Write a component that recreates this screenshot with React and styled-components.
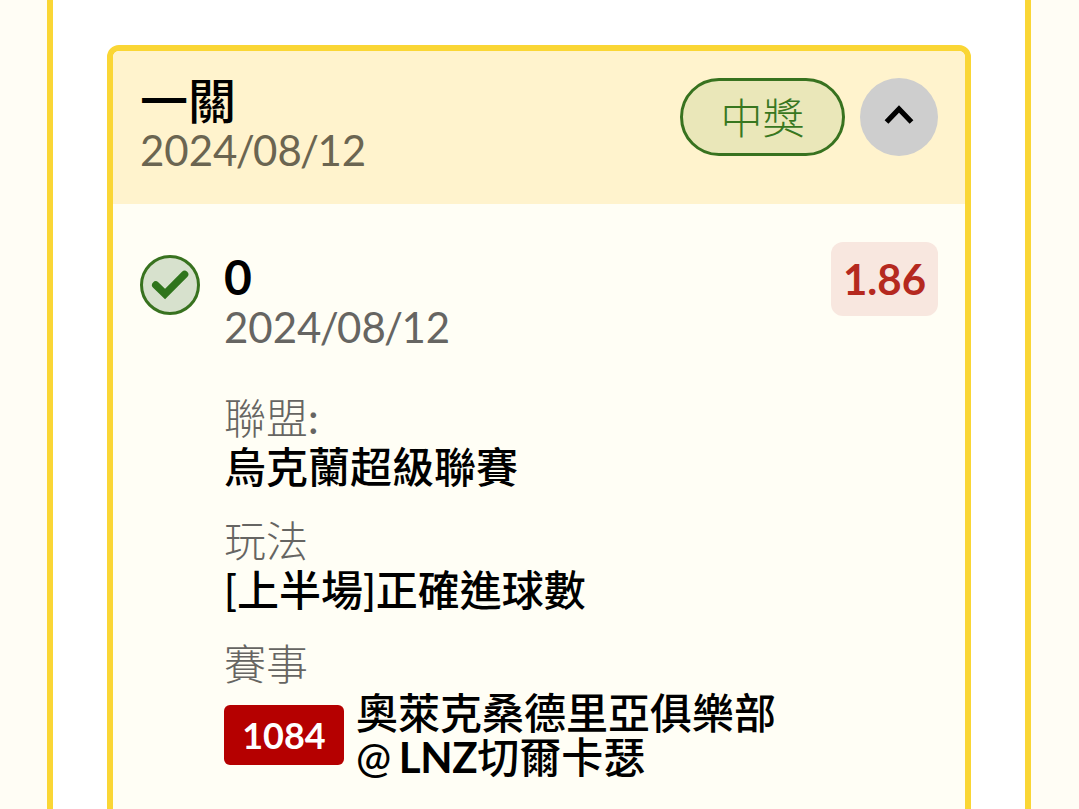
import React from "react";
import styled, { createGlobalStyle } from "styled-components";

const GlobalStyle = createGlobalStyle`
  * {
    box-sizing: border-box;
  }

  body {
    margin: 0;
    overflow: hidden;
    background: #fffdf5;
    color: #000;
    font-family: Lato, "Noto Sans CJK TC", sans-serif;
    font-size: 42px;
  }
`;

const Page = styled.div`
  height: 809px;
  padding: 0 48px 0 47px;
  overflow: hidden;
`;

const Panel = styled.div`
  height: 100%;
  padding: 45px 54px 0;
  border: solid #fad635;
  border-width: 0 6px;
  background: #fff;
`;

const Card = styled.div`
  height: 800px;
  border: 6px solid #fad635;
  border-radius: 12px;
  background: #fffef5;
  overflow: hidden;
`;

const CardHeader = styled.div`
  display: flex;
  justify-content: space-between;
  height: 153px;
  padding: 25px 27px 0;
  background: #fff3cd;
`;

const Title = styled.div`
  font-size: 48px;
  font-weight: ${props => props.weight || 700};
  line-height: ${props => props.height || 49}px;
`;

const DateText = styled.div`
  line-height: 50px;
  color: ${props => props.color || "#666562"};
`;

const Slash = styled.span`
  margin: 0 -1.7px;
`;

const Actions = styled.div`
  display: flex;
  gap: 15px;
  padding-top: 2px;
`;

const Status = styled.div`
  width: 165px;
  height: 78px;
  border: 3px solid #38721f;
  border-radius: 39px;
  background: #eae7b9;
  color: #38771f;
  font-weight: 300;
  line-height: 74px;
  text-align: center;
`;

const Toggle = styled.button`
  display: flex;
  justify-content: center;
  width: 78px;
  height: 78px;
  padding: 27px 0 0;
  border: none;
  border-radius: 50%;
  background: #cecece;
`;

const CardBody = styled.div`
  display: flex;
  padding: 48px 27px 0;
`;

const CheckCircle = styled.div`
  width: 60px;
  height: 60px;
  margin: 3px 24px 0 0;
  border: 3px solid #38721f;
  border-radius: 50%;
  background: #d7e1cd;
`;

const Content = styled.div`
  flex: 1;
`;

const Odds = styled.div`
  width: 107px;
  height: 74px;
  margin-top: -10px;
  border-radius: 12px;
  background: #f8e7df;
  color: #b5291f;
  font-weight: 700;
  line-height: 75px;
  text-align: center;
`;

const Top = styled.div`
  display: flex;
  justify-content: space-between;
  height: 141px;
`;

const Field = styled.div`
  height: 123px;
`;

const Label = styled.div`
  color: #666562;
  font-weight: 300;
  line-height: 50px;
`;

const Value = styled.div`
  font-weight: 500;
  line-height: 49px;
`;

const Match = styled.div`
  display: flex;
  align-items: center;
  gap: 12px;
  padding-top: 2px;
`;

const MatchCode = styled.div`
  width: 120px;
  height: 60px;
  border-radius: 6px;
  background: #b50000;
  color: #fff;
  font-size: 36px;
  font-weight: 700;
  line-height: 61px;
  text-align: center;
`;

const Teams = styled.div`
  font-weight: 500;
  line-height: 44px;
`;

const Latin = styled.span`
  margin-left: -3px;
  font-weight: 700;
  letter-spacing: -0.4px;
`;

const Colon = styled.span`
  font-weight: 500;
`;

const fields = [
  { label: "聯盟", colon: true, value: "烏克蘭超級聯賽" },
  { label: "玩法", value: "[上半場]正確進球數" }
];

function BetDate({ color }) {
  return (
    <DateText color={color}>
      2024<Slash>/</Slash>08<Slash>/</Slash>12
    </DateText>
  );
}

function ChevronUp() {
  return (
    <svg width="30" height="20" viewBox="0 0 30 20" fill="none">
      <path d="M2.5 17 L15 3.9 L27.5 17" stroke="#000" strokeWidth="5.2" />
    </svg>
  );
}

function Check() {
  return (
    <svg width="54" height="54" viewBox="0 0 54 54" fill="none">
      <path
        d="M12.7 27 L22 36 L41.6 16.3"
        stroke="#2f741c"
        strokeWidth="7.4"
        strokeLinecap="round"
      />
    </svg>
  );
}

export default function App() {
  return (
    <Page>
      <GlobalStyle />
      <Panel>
        <Card>
          <CardHeader>
            <div>
              <Title weight={500}>一關</Title>
              <BetDate color="#6b6551" />
            </div>
            <Actions>
              <Status>中獎</Status>
              <Toggle>
                <ChevronUp />
              </Toggle>
            </Actions>
          </CardHeader>
          <CardBody>
            <CheckCircle>
              <Check />
            </CheckCircle>
            <Content>
              <Top>
                <div>
                  <Title height={50}>0</Title>
                  <BetDate />
                </div>
                <Odds>1.86</Odds>
              </Top>
              {fields.map(field => (
                <Field key={field.label}>
                  <Label>
                    {field.label}
                    {field.colon && <Colon>:</Colon>}
                  </Label>
                  <Value>{field.value}</Value>
                </Field>
              ))}
              <Label>賽事</Label>
              <Match>
                <MatchCode>1084</MatchCode>
                <Teams>
                  <div>奧萊克桑德里亞俱樂部</div>
                  <div>
                    @ <Latin>LNZ</Latin>切爾卡瑟
                  </div>
                </Teams>
              </Match>
            </Content>
          </CardBody>
        </Card>
      </Panel>
    </Page>
  );
}
